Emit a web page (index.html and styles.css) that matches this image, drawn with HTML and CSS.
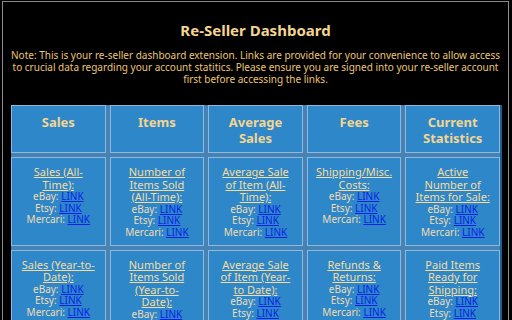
FILE: index.html
```html
<!DOCTYPE html>
<html lang="en">
<head>
  <meta charset="UTF-8">
  <title>Re-Seller Dashboard</title>
  <link rel="stylesheet" href="styles.css">
</head>
<body>

<div class="frame">
  <h1>Re-Seller Dashboard</h1>
  <p class="note">Note: This is your re-seller dashboard extension. Links are provided for your convenience to allow access to crucial data regarding your account statitics. Please ensure you are signed into your re-seller account first before accessing the links.</p>

  <div class="dash">
    <div class="head">Sales</div>
    <div class="head">Items</div>
    <div class="head">Average<br>Sales</div>
    <div class="head">Fees</div>
    <div class="head">Current<br>Statistics</div>

    <div class="cell">
      <span class="title">Sales (All-<br>Time):</span>
      eBay: <a href="#">LINK</a><br>
      Etsy: <a href="#">LINK</a><br>
      Mercari: <a href="#">LINK</a>
    </div>
    <div class="cell">
      <span class="title">Number of<br>Items Sold<br>(All-Time):</span>
      eBay: <a href="#">LINK</a><br>
      Etsy: <a href="#">LINK</a><br>
      Mercari: <a href="#">LINK</a>
    </div>
    <div class="cell">
      <span class="title">Average Sale<br>of Item (All-<br>Time):</span>
      eBay: <a href="#">LINK</a><br>
      Etsy: <a href="#">LINK</a><br>
      Mercari: <a href="#">LINK</a>
    </div>
    <div class="cell">
      <span class="title">Shipping/Misc.<br>Costs:</span>
      eBay: <a href="#">LINK</a><br>
      Etsy: <a href="#">LINK</a><br>
      Mercari: <a href="#">LINK</a>
    </div>
    <div class="cell">
      <span class="title">Active<br>Number of<br>Items for Sale:</span>
      eBay: <a href="#">LINK</a><br>
      Etsy: <a href="#">LINK</a><br>
      Mercari: <a href="#">LINK</a>
    </div>

    <div class="cell">
      <span class="title">Sales (Year-to-<br>Date):</span>
      eBay: <a href="#">LINK</a><br>
      Etsy: <a href="#">LINK</a><br>
      Mercari: <a href="#">LINK</a>
    </div>
    <div class="cell">
      <span class="title">Number of<br>Items Sold<br>(Year-to-<br>Date):</span>
      eBay: <a href="#">LINK</a><br>
      Etsy: <a href="#">LINK</a><br>
      Mercari: <a href="#">LINK</a>
    </div>
    <div class="cell">
      <span class="title">Average Sale<br>of Item (Year-<br>to Date):</span>
      eBay: <a href="#">LINK</a><br>
      Etsy: <a href="#">LINK</a><br>
      Mercari: <a href="#">LINK</a>
    </div>
    <div class="cell">
      <span class="title">Refunds &amp;<br>Returns:</span>
      eBay: <a href="#">LINK</a><br>
      Etsy: <a href="#">LINK</a><br>
      Mercari: <a href="#">LINK</a>
    </div>
    <div class="cell">
      <span class="title">Paid Items<br>Ready for<br>Shipping:</span>
      eBay: <a href="#">LINK</a><br>
      Etsy: <a href="#">LINK</a><br>
      Mercari: <a href="#">LINK</a>
    </div>
  </div>
</div>

</body>
</html>
```

FILE: styles.css
```css
html, body {
  margin: 0;
  padding: 0;
  background-color: #000;
  overflow: hidden;
}
body {
  font-family: "Noto Sans", "Open Sans", sans-serif;
  color: #f1d9a6;
}
.frame {
  margin: 1px 3px 0 2px;
  height: 330px;
  border: 1px solid #8a8a8a;
  background-color: #000;
}
h1 {
  margin: 0;
  padding-top: 18px;
  font-size: 15px;
  line-height: 20px;
  text-align: center;
  color: #f3d590;
}
.note {
  margin: 9px 3px 0;
  font-size: 10px;
  line-height: 12px;
  text-align: center;
  color: #eec574;
}
.dash {
  display: grid;
  grid-template-columns: repeat(5, 1fr);
  gap: 4px;
  margin: 20px 6px 0 8px;
  border-right: 2px solid #1d5f92;
  background-color: #4682b4;
}
.head, .cell {
  text-align: center;
  background-color: #2e87c9;
  border: 1px solid #8fb8da;
  padding: 8px 2px 6px;
  white-space: nowrap;
}
.head {
  font-size: 13px;
  font-weight: bold;
  line-height: 16px;
  min-height: 32px;
  color: #f3d590;
}
.cell {
  font-size: 10px;
  line-height: 11.7px;
  color: #f1dcb0;
}
.title {
  display: block;
  font-size: 11px;
  line-height: 12.5px;
  text-decoration: underline;
  color: #f5dc9c;
}
.cell a {
  color: #0b1ee8;
}
```
